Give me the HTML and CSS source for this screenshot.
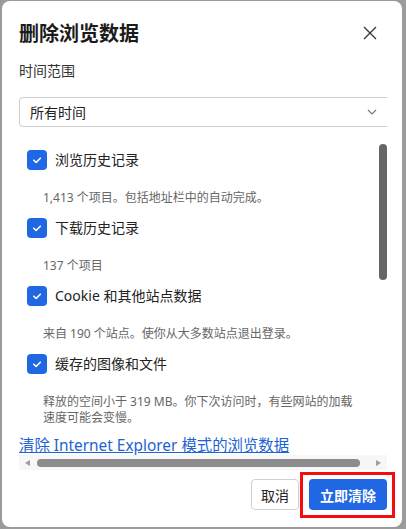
FILE: index.html
```html
<!DOCTYPE html>
<html lang="zh-CN">
<head>
<meta charset="utf-8">
<title>删除浏览数据</title>
<link rel="stylesheet" href="styles.css">
</head>
<body>
<div class="dialog">
  <div class="header">
    <h1 class="title">删除浏览数据</h1>
    <button class="close" aria-label="关闭">
      <svg width="14" height="14" viewBox="0 0 14 14"><path d="M1 1L13 13M13 1L1 13" stroke="#333" stroke-width="1.3" fill="none"/></svg>
    </button>
  </div>
  <div class="scroll">
    <div class="range-label">时间范围</div>
    <div class="select">
      <span>所有时间</span>
      <svg width="10" height="6" viewBox="0 0 10 6"><path d="M1 1l4 4 4-4" stroke="#777" stroke-width="1.2" fill="none"/></svg>
    </div>
    <div class="list">
      <div class="item">
        <div class="row"><span class="cb"><svg width="20" height="20" viewBox="0 0 20 20"><path d="M6.8 10.2l2.3 2.3 4.2-4.3" stroke="#fff" stroke-width="1.6" fill="none" stroke-linecap="round" stroke-linejoin="round"/></svg></span><span class="label">浏览历史记录</span></div>
        <div class="desc">1,413 个项目。包括地址栏中的自动完成。</div>
      </div>
      <div class="item">
        <div class="row"><span class="cb"><svg width="20" height="20" viewBox="0 0 20 20"><path d="M6.8 10.2l2.3 2.3 4.2-4.3" stroke="#fff" stroke-width="1.6" fill="none" stroke-linecap="round" stroke-linejoin="round"/></svg></span><span class="label">下载历史记录</span></div>
        <div class="desc">137 个项目</div>
      </div>
      <div class="item">
        <div class="row"><span class="cb"><svg width="20" height="20" viewBox="0 0 20 20"><path d="M6.8 10.2l2.3 2.3 4.2-4.3" stroke="#fff" stroke-width="1.6" fill="none" stroke-linecap="round" stroke-linejoin="round"/></svg></span><span class="label">Cookie 和其他站点数据</span></div>
        <div class="desc">来自 190 个站点。使你从大多数站点退出登录。</div>
      </div>
      <div class="item">
        <div class="row"><span class="cb"><svg width="20" height="20" viewBox="0 0 20 20"><path d="M6.8 10.2l2.3 2.3 4.2-4.3" stroke="#fff" stroke-width="1.6" fill="none" stroke-linecap="round" stroke-linejoin="round"/></svg></span><span class="label">缓存的图像和文件</span></div>
        <div class="desc">释放的空间小于 319 MB。你下次访问时，有些网站的加载<br>速度可能会变慢。</div>
      </div>
    </div>
    <a class="link" href="#">清除 Internet Explorer 模式的浏览数据</a>
  </div>
  <div class="hscroll">
    <span class="arrow-left"></span>
    <span class="hthumb"></span>
    <span class="arrow-right"></span>
  </div>
  <div class="vthumb"></div>
  <div class="buttons">
    <button class="btn cancel">取消</button>
    <button class="btn primary">立即清除<span class="highlight"></span></button>
  </div>
</div>
</body>
</html>
```
FILE: styles.css
```css
html, body {
  margin: 0;
  padding: 0;
}
body {
  background: #9b9b9b;
  width: 406px;
  height: 529px;
  overflow: hidden;
  font-family: "Noto Sans", "Noto Sans CJK SC", sans-serif;
  color: #222;
}
.dialog {
  position: relative;
  margin: 1px 0 0 2px;
  width: 400px;
  height: 526px;
  box-sizing: border-box;
  padding: 21px 15px 0 17px;
  background: #fff;
  border-radius: 8px;
  display: flex;
  flex-direction: column;
}
.header {
  display: flex;
  justify-content: space-between;
  align-items: center;
  height: 22px;
}
.title {
  margin: 0;
  font-size: 20px;
  line-height: 22px;
  font-weight: 700;
  color: #1b1b1b;
  font-family: "Noto Sans CJK SC", sans-serif;
}
.close {
  border: 0;
  background: none;
  padding: 0;
  margin: 0 10px 0 0;
  width: 14px;
  height: 14px;
  display: flex;
}
.scroll {
  width: 368px;
  overflow: hidden;
}
.range-label {
  margin-top: 17px;
  font-size: 14px;
  line-height: 20px;
  color: #333;
}
.select {
  margin-top: 16px;
  width: 377px;
  height: 30px;
  box-sizing: border-box;
  border: 1px solid #cfcfcf;
  border-radius: 4px;
  display: flex;
  align-items: center;
  justify-content: space-between;
  padding: 0 18px 0 10px;
  font-size: 14px;
  color: #222;
}
.list {
  margin-top: 23px;
  display: flex;
  flex-direction: column;
  gap: 12px;
}
.row {
  display: flex;
  align-items: center;
  height: 20px;
  padding-left: 8px;
}
.cb {
  width: 20px;
  height: 20px;
  border-radius: 4px;
  background: #1f67e3;
  display: flex;
}
.label {
  margin-left: 8px;
  font-size: 14px;
  line-height: 20px;
  color: #222;
}
.desc {
  margin-top: 20px;
  padding-left: 24px;
  font-size: 12px;
  line-height: 16px;
  color: #666;
}
.link {
  display: block;
  margin-top: 10px;
  font-size: 15.4px;
  line-height: 19px;
  color: #1d63d1;
  text-decoration: underline;
  white-space: nowrap;
}
.hscroll {
  width: 368px;
  height: 15px;
  background: #f7f7f7;
  display: flex;
  align-items: center;
}
.arrow-left {
  width: 0;
  height: 0;
  margin-left: 6px;
  border-top: 3.5px solid transparent;
  border-bottom: 3.5px solid transparent;
  border-right: 5px solid #9d9d9d;
}
.hthumb {
  margin-left: 7px;
  width: 323px;
  height: 8px;
  border-radius: 4px;
  background: #8c8c8c;
}
.arrow-right {
  width: 0;
  height: 0;
  margin-left: 16px;
  border-top: 3.5px solid transparent;
  border-bottom: 3.5px solid transparent;
  border-left: 5px solid #9d9d9d;
}
.vthumb {
  position: absolute;
  left: 377px;
  top: 143px;
  width: 8px;
  height: 136px;
  border-radius: 4px;
  background: #666;
}
.buttons {
  margin-top: 9px;
  display: flex;
  justify-content: flex-end;
  gap: 10px;
}
.btn {
  height: 31px;
  box-sizing: border-box;
  border-radius: 4px;
  font-family: "Noto Sans CJK SC", sans-serif;
  font-size: 14px;
  padding: 0;
}
.cancel {
  width: 48px;
  border: 1px solid #d1d1d1;
  background: #fff;
  color: #222;
}
.primary {
  position: relative;
  width: 78px;
  border: 0;
  background: #1f67e3;
  color: #fff;
  font-weight: 700;
}
.highlight {
  position: absolute;
  left: -9px;
  top: -7px;
  right: -8px;
  bottom: -8px;
  border: 3px solid #f40d0d;
  pointer-events: none;
}
```
